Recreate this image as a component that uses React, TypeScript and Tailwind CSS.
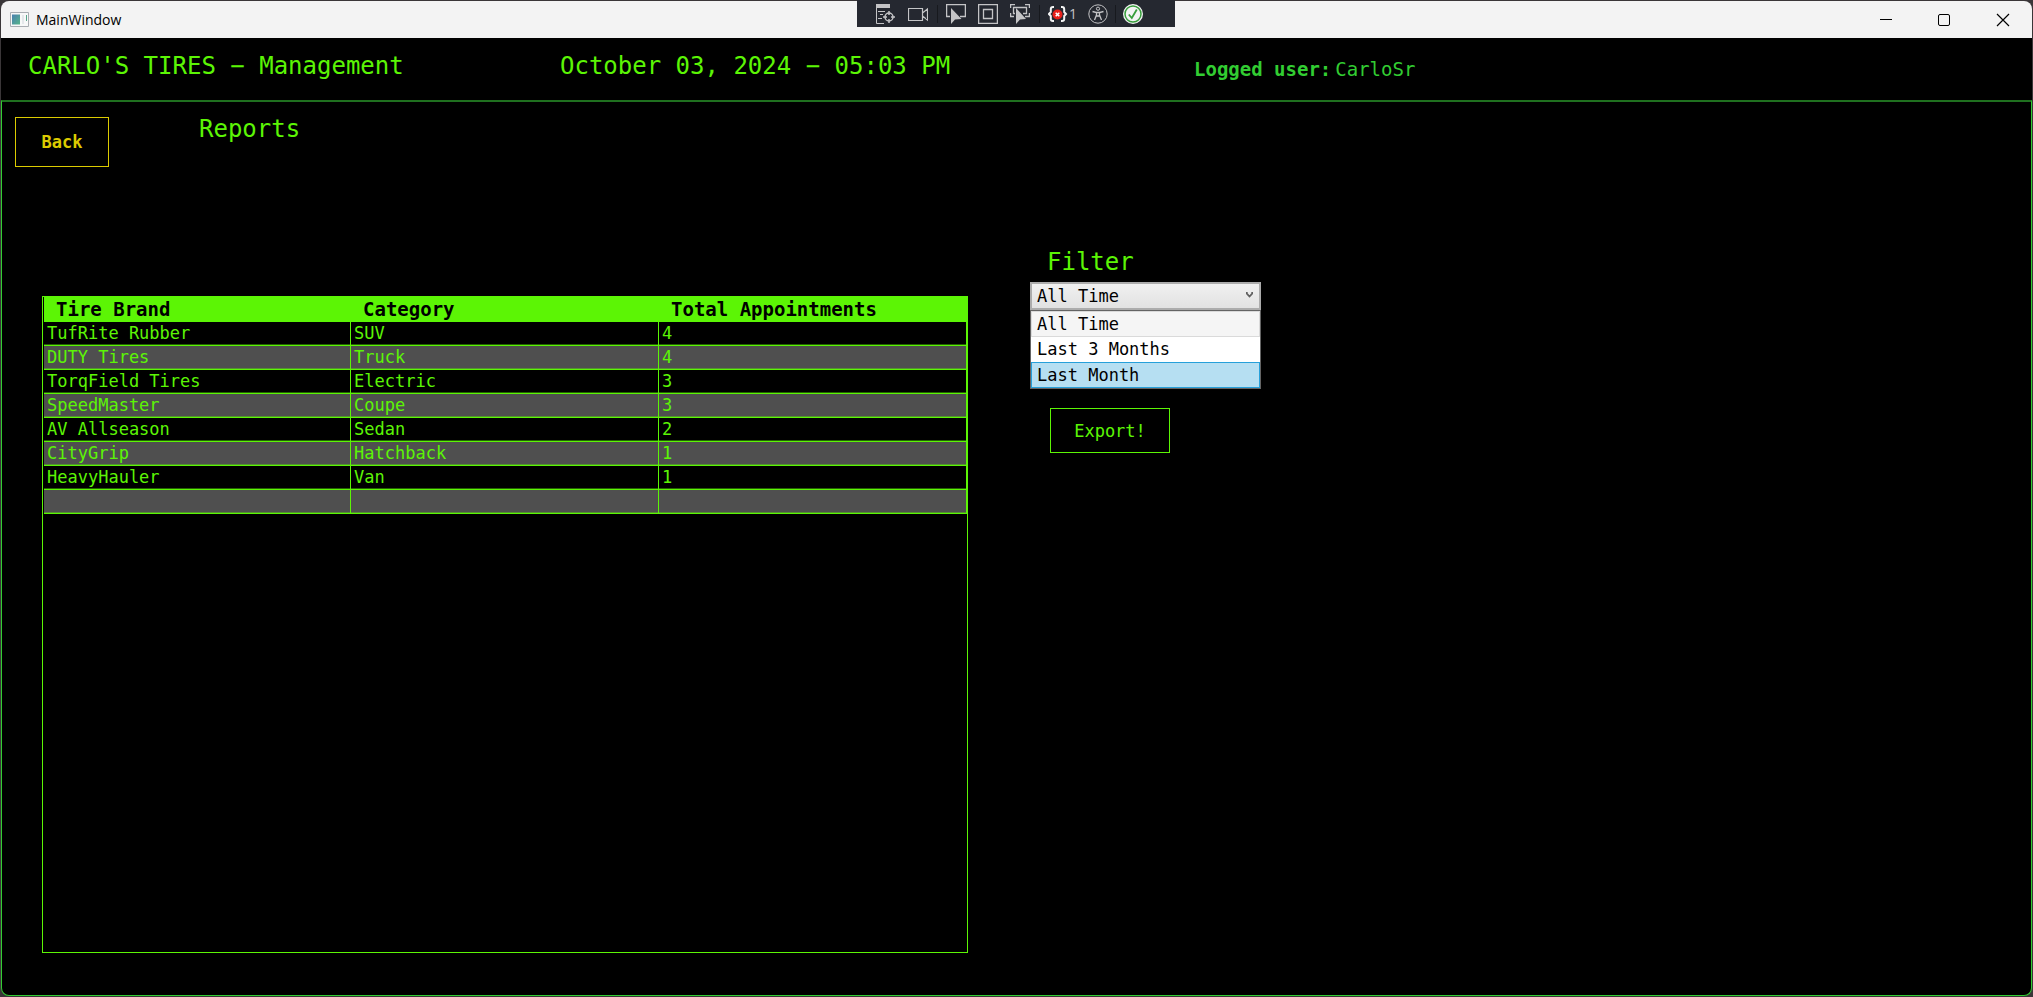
import type { ReactNode } from "react";

type Row = { brand: string; category: string; total: string };

const rows: Row[] = [
  { brand: "TufRite Rubber", category: "SUV", total: "4" },
  { brand: "DUTY Tires", category: "Truck", total: "4" },
  { brand: "TorqField Tires", category: "Electric", total: "3" },
  { brand: "SpeedMaster", category: "Coupe", total: "3" },
  { brand: "AV Allseason", category: "Sedan", total: "2" },
  { brand: "CityGrip", category: "Hatchback", total: "1" },
  { brand: "HeavyHauler", category: "Van", total: "1" },
  { brand: "", category: "", total: "" },
];

function ToolButton({ label, className, children }: { label: string; className?: string; children: ReactNode }) {
  return (
    <button type="button" aria-label={label} className={`flex h-6 items-center ${className ?? ""}`}>
      {children}
    </button>
  );
}

function DebugToolbar() {
  return (
    <div className="absolute left-[857px] top-0 flex h-[27px] w-[318px] items-center bg-[#252830] pl-[19px] text-[#c4c4c6]">
      <ToolButton label="Go to live visual tree">
        <svg width="20" height="20" viewBox="0 0 20 20" fill="none" stroke="currentColor">
          <path d="M0 0h14v4H0z" fill="currentColor" stroke="none" />
          <path d="M.5 4v15.500H8M2 7.500h7M4 10.500h3M2 14.500h4" />
          <circle cx="13" cy="13" r="4" strokeWidth="1.500" />
          <path d="M13 7v4M13 15v4M7 13h4M15 13h4" strokeWidth="1.500" />
        </svg>
      </ToolButton>
      <ToolButton label="Record" className="ml-3">
        <svg width="20" height="20" viewBox="0 0 20 20" fill="none" stroke="currentColor" strokeWidth="1.200">
          <path d="M.5 4.500h14v12H.5zM14.500 9l5-4v11l-5-4" />
        </svg>
      </ToolButton>
      <span className="ml-[9px] h-[18px] w-px bg-[#17191e]" />
      <ToolButton label="Select element" className="ml-2">
        <svg width="20" height="20" viewBox="0 0 20 20" fill="none" stroke="currentColor" strokeWidth="1.300">
          <path d="M4 12.500H.6V.6h18.800v11.900H14" />
          <path d="M5 4v16l4-4.500 6.500-.5z" fill="currentColor" stroke="none" />
        </svg>
      </ToolButton>
      <ToolButton label="Display layout adorners" className="ml-3">
        <svg width="20" height="20" viewBox="0 0 20 20" fill="none" stroke="currentColor" strokeWidth="1.300">
          <path d="M.6.6h18.800v18.800H.6zM5.500 5.500h9v9h-9z" />
        </svg>
      </ToolButton>
      <ToolButton label="Track focused element" className="ml-3">
        <svg width="20" height="20" viewBox="0 0 20 20" fill="none" stroke="currentColor" strokeWidth="1.300">
          <path d="M.6 4V.6H5M15 .6h4.400V4M.6 9v3.500H4M15 12.500h4.400V9M5 9.500H3.500v-6h13v6H13" />
          <path d="M6 4v16l4-4.500 6-.5z" fill="currentColor" stroke="none" />
        </svg>
      </ToolButton>
      <span className="ml-[9px] h-[18px] w-px bg-[#17191e]" />
      <ToolButton label="Binding failures" className="ml-2 w-[30px] gap-px font-['Open_Sans',sans-serif] text-sm">
        <svg width="20" height="20" viewBox="0 0 20 20" fill="none" className="shrink-0">
          <path d="M6 3H5Q2.800 3 2.800 5V8L1 10l1.800 2v3q0 2 2.200 2h1M13 3h1q2.200 0 2.200 2v3L18 10l-1.800 2v3q0 2-2.200 2h-1" stroke="#f4f4f4" strokeWidth="2" />
          <circle cx="9.500" cy="10.500" r="5" fill="#e8211b" />
          <path d="M7.700 8.700l3.600 3.600M11.300 8.700l-3.600 3.600" stroke="#fff" strokeWidth="1.500" />
        </svg>
        <span>1</span>
      </ToolButton>
      <ToolButton label="Scan for accessibility issues" className="ml-[10px]">
        <svg width="20" height="20" viewBox="0 0 20 20" fill="none" stroke="currentColor">
          <circle cx="10" cy="10" r="9.200" />
          <circle cx="10" cy="4.700" r="1.600" />
          <path d="M4.500 7.500L8.500 8.500V11L6.500 16M15.500 7.500L11.500 8.500V11L13.500 16M8.500 8.500h3M8.500 12h3" strokeWidth="1.300" />
        </svg>
      </ToolButton>
      <span className="ml-[7px] h-[18px] w-px bg-[#17191e]" />
      <ToolButton label="Hot Reload" className="ml-[7px]">
        <svg width="20" height="20" viewBox="0 0 20 20" fill="none">
          <circle cx="10" cy="10" r="10" fill="#f4f4f4" />
          <circle cx="10" cy="10" r="8" stroke="#389e3c" strokeWidth="1.500" />
          <path d="M5.800 10.500l3 3.500 5-8.500" stroke="#389e3c" strokeWidth="1.800" />
        </svg>
      </ToolButton>
    </div>
  );
}

function TitleBar() {
  return (
    <div className="flex h-[37px] items-center justify-between rounded-t-lg bg-[#f3f3f3] text-black">
      <div className="flex items-center gap-[7px] pl-[9px] font-['Open_Sans',sans-serif] text-sm">
        <svg width="19" height="15" viewBox="0 0 19 15">
          <defs>
            <linearGradient id="appGlass" x1="0" y1="0" x2="1" y2="1">
              <stop offset="0" stopColor="#4a7fb0" />
              <stop offset="1" stopColor="#56b58a" />
            </linearGradient>
          </defs>
          <path d="M.5.5h18v14H.5z" fill="#f7f8f8" stroke="#a9adb2" />
          <path d="M2 2.500h8v10H2z" fill="url(#appGlass)" />
          <path d="M12 3h2v9h-2z" fill="#e4e7ea" />
          <path d="M16 3h1v6h-1z" fill="#56a58a" />
        </svg>
        <span>MainWindow</span>
      </div>
      <div className="flex h-full">
        <button type="button" aria-label="Minimize" className="flex w-[58px] items-center justify-center">
          <svg width="12" height="12" viewBox="0 0 12 12" fill="none" stroke="currentColor"><path d="M0 5.500h12" /></svg>
        </button>
        <button type="button" aria-label="Maximize" className="flex w-[58px] items-center justify-center">
          <svg width="12" height="12" viewBox="0 0 12 12" fill="none" stroke="currentColor"><rect x=".5" y=".5" width="11" height="11" rx="1.500" /></svg>
        </button>
        <button type="button" aria-label="Close" className="flex w-[59px] items-center justify-center">
          <svg width="14" height="14" viewBox="0 0 14 14" fill="none" stroke="currentColor" strokeWidth="1.200"><path d="M1 1l12 12M13 1L1 13" /></svg>
        </button>
      </div>
    </div>
  );
}

function ReportTable() {
  return (
    <div className="h-[657px] w-[926px] border border-[#5cf505] pl-px">
      <table className="w-full table-fixed border-separate border-spacing-0 text-left text-[17px] leading-[23px]">
        <colgroup>
          <col className="w-[307px]" />
          <col className="w-[308px]" />
          <col />
        </colgroup>
        <thead>
          <tr className="h-[25px] bg-[#5cf505] text-[19px] text-black">
            <th scope="col" className="p-0 pl-3 font-bold">Tire Brand</th>
            <th scope="col" className="p-0 pl-3 font-bold">Category</th>
            <th scope="col" className="p-0 pl-3 font-bold">Total Appointments</th>
          </tr>
        </thead>
        <tbody>
          {rows.map((row, index) => (
            <tr key={index} className="h-6 odd:bg-black even:bg-[#4f4f4f]">
              {[row.brand, row.category, row.total].map((cell, column) => (
                <td key={column} className="h-6 border-b border-r border-[#5cf505] p-0 pl-[3px] shadow-[inset_0_-1px_0_rgba(92,245,5,0.4)]">
                  {cell}
                </td>
              ))}
            </tr>
          ))}
        </tbody>
      </table>
    </div>
  );
}

function FilterPanel() {
  const options = ["All Time", "Last 3 Months", "Last Month"];
  return (
    <div className="flex w-[231px] flex-col pt-[11px]">
      <label htmlFor="period" className="pl-[17px] text-2xl leading-7">Filter</label>
      <div className="relative mt-[6px] text-[17px] text-black">
        <select
          id="period"
          defaultValue="All Time"
          className="block h-7 w-full appearance-none border-2 border-[#acacac] bg-linear-to-b from-[#f0f0f0] to-[#e2e2e2] pl-[5px] leading-6 outline-none"
        >
          {options.map((option) => (
            <option key={option}>{option}</option>
          ))}
        </select>
        <svg className="pointer-events-none absolute right-2 top-[9px]" width="7" height="8" viewBox="0 0 7 8" fill="none" stroke="#606060" strokeWidth="1.800">
          <path d="M.8 1v1.500l2.700 3 2.700-3V1" />
        </svg>
        <ul role="listbox" aria-label="Period" className="absolute left-0 top-7 w-full border border-[#646464] bg-white leading-6">
          <li role="option" aria-selected="true" className="h-[26px] border border-[#dadada] bg-[#f5f5f5] pl-[5px]">All Time</li>
          <li role="option" aria-selected="false" className="h-[25px] pl-[6px]">Last 3 Months</li>
          <li role="option" aria-selected="false" className="h-[26px] border border-[#26a0da] bg-[#b6dff2] pl-[5px]">Last Month</li>
        </ul>
      </div>
      <button type="button" className="ml-5 mt-[98px] h-[45px] w-[120px] border border-[#5cf505] pt-[2px] text-[17px]">Export!</button>
    </div>
  );
}

export default function App() {
  return (
    <div className="flex min-h-screen flex-col bg-[#3a3638] px-px pb-px pt-px font-['DejaVu_Sans_Mono',monospace] text-[#5cf505]">
      <TitleBar />
      <header className="flex h-[62px] items-center bg-black pb-[6px] text-2xl">
        <h1 className="w-[532px] pl-[27px]">CARLO'S TIRES − Management</h1>
        <p className="w-[661px] pl-[27px]">October 03, 2024 − 05:03 PM</p>
        <p className="flex gap-1 pt-2 text-[19px] text-[#32cd32]">
          <span className="font-bold">Logged user:</span>
          <span>CarloSr</span>
        </p>
      </header>
      <main className="flex grow flex-col rounded-b-lg border border-t-2 border-[#32cd32] border-t-[#1f701f] bg-black px-[13px] pt-[15px]">
        <div className="flex items-start">
          <button type="button" className="h-[50px] w-[94px] border border-[#dccb00] pt-[2px] text-[17px] font-bold text-[#dccb00]">Back</button>
          <h2 className="ml-[90px] text-2xl leading-6">Reports</h2>
        </div>
        <div className="flex items-start pl-[27px] pt-[70px]">
          <div className="pt-[59px]">
            <ReportTable />
          </div>
          <div className="ml-[62px]">
            <FilterPanel />
          </div>
        </div>
      </main>
      <DebugToolbar />
    </div>
  );
}
